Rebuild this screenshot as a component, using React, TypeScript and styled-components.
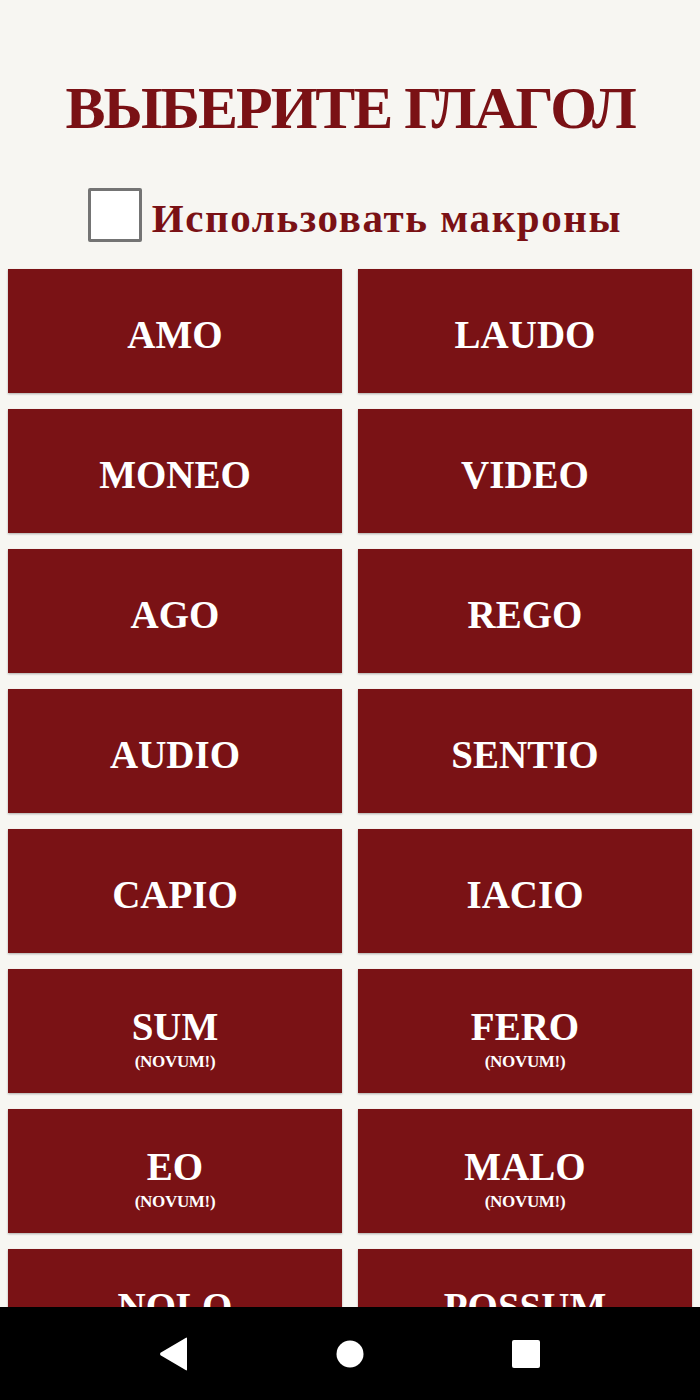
import React from 'react';
import styled, { createGlobalStyle } from 'styled-components';

const GlobalStyle = createGlobalStyle`
  html, body {
    margin: 0;
    padding: 0;
    background: #f7f6f2;
  }
  body {
    font-family: "Liberation Serif", "DejaVu Serif", serif;
  }
`;

const Page = styled.div`
  min-height: 1400px;
  background: #f7f6f2;
  padding-bottom: 93px;
`;

const Title = styled.h1`
  margin: 0;
  padding-top: 78px;
  font-size: 60px;
  line-height: 1;
  font-weight: 700;
  text-align: center;
  color: #7a1115;
  letter-spacing: -2px;
`;

const MacronRow = styled.label`
  display: flex;
  align-items: center;
  justify-content: center;
  gap: 10px;
  margin-top: 50px;
  padding-left: 10px;
  cursor: pointer;
`;

const Box = styled.span`
  box-sizing: border-box;
  width: 54px;
  height: 54px;
  border: 3px solid #747474;
  border-radius: 2px;
  background: #ffffff;
`;

const MacronText = styled.span`
  font-size: 41px;
  line-height: 1;
  font-weight: 700;
  color: #7a1115;
  letter-spacing: 1.6px;
  margin-top: 6px;
`;

const Grid = styled.div`
  display: grid;
  grid-template-columns: 1fr 1fr;
  gap: 16px;
  padding: 27px 8px 8px;
`;

const VerbButton = styled.button`
  height: 124px;
  border: none;
  border-radius: 0;
  background: #7a1215;
  box-shadow: 0 1px 2px rgba(0, 0, 0, 0.3);
  color: #ffffff;
  font-family: "Liberation Serif", "DejaVu Serif", serif;
  font-weight: 700;
  display: flex;
  flex-direction: column;
  align-items: center;
  justify-content: center;
  padding: 0;
  cursor: pointer;
`;

const VerbName = styled.span<{ $withNote: boolean }>`
  font-size: 39px;
  line-height: 1;
  margin-top: ${(p) => (p.$withNote ? '15px' : '7px')};
`;

const Note = styled.span`
  font-size: 17px;
  line-height: 1;
  margin-top: 7px;
  letter-spacing: -0.3px;
`;

const NavBar = styled.nav`
  position: fixed;
  left: 0;
  right: 0;
  bottom: 0;
  height: 93px;
  background: #000000;
  display: flex;
  align-items: center;
  justify-content: center;
  gap: 146px;
`;

const NavIcon = styled.svg`
  width: 30px;
  height: 34px;
  display: block;
`;

const verbs: { name: string; novum?: boolean }[] = [
  { name: 'AMO' },
  { name: 'LAUDO' },
  { name: 'MONEO' },
  { name: 'VIDEO' },
  { name: 'AGO' },
  { name: 'REGO' },
  { name: 'AUDIO' },
  { name: 'SENTIO' },
  { name: 'CAPIO' },
  { name: 'IACIO' },
  { name: 'SUM', novum: true },
  { name: 'FERO', novum: true },
  { name: 'EO', novum: true },
  { name: 'MALO', novum: true },
  { name: 'NOLO', novum: true },
  { name: 'POSSUM', novum: true },
];

export default function App() {
  return (
    <>
      <GlobalStyle />
      <Page>
        <Title>ВЫБЕРИТЕ ГЛАГОЛ</Title>
        <MacronRow>
          <Box />
          <MacronText>Использовать макроны</MacronText>
        </MacronRow>
        <Grid>
          {verbs.map((v) => (
            <VerbButton key={v.name}>
              <VerbName $withNote={!!v.novum}>{v.name}</VerbName>
              {v.novum && <Note>(NOVUM!)</Note>}
            </VerbButton>
          ))}
        </Grid>
      </Page>
      <NavBar>
        <NavIcon viewBox="0 0 30 34">
          <path d="M28 1.5 L28 32.5 Q28 34 26.6 33 L1.5 18.2 Q0.5 17 1.5 15.8 L26.6 1 Q28 0 28 1.5 Z" fill="#fff" />
        </NavIcon>
        <NavIcon viewBox="0 0 30 34">
          <circle cx="15" cy="17" r="13.5" fill="#fff" />
        </NavIcon>
        <NavIcon viewBox="0 0 30 34">
          <rect x="1" y="3" width="28" height="28" rx="2" fill="#fff" />
        </NavIcon>
      </NavBar>
    </>
  );
}
